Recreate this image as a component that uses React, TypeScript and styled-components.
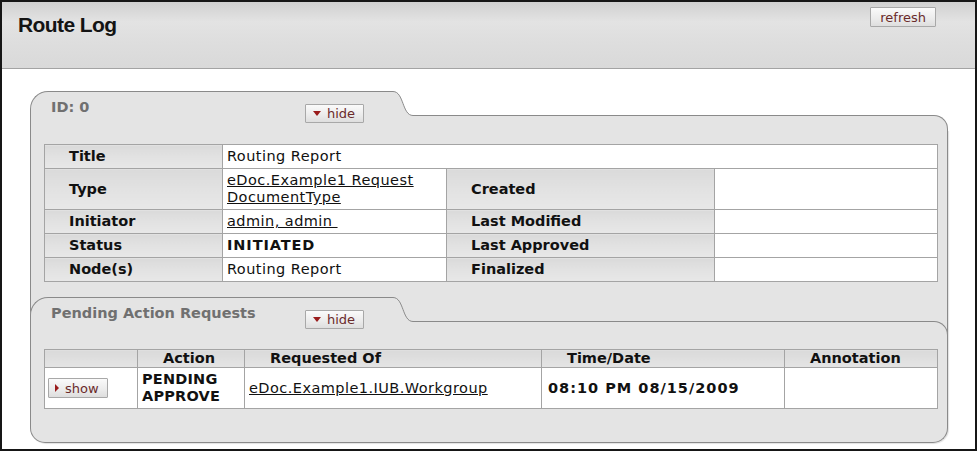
import React from "react";
import styled, { createGlobalStyle } from "styled-components";

const GlobalStyle = createGlobalStyle`
  html, body { margin: 0; padding: 0; background: #fff; }
  body { font-family: "DejaVu Sans", Verdana, sans-serif; }
`;

const LINE = "#8a8a8a";
const PANEL = "#e4e4e4";
const CELL_LINE = "#a4a4a4";

const Frame = styled.div`
  width: 977px;
  height: 451px;
  box-sizing: border-box;
  border: 2px solid #161616;
  background: #fff;
  overflow: hidden;
`;

const PageHeader = styled.header`
  height: 67px;
  box-sizing: border-box;
  border-bottom: 1px solid #a3a3a3;
  background: linear-gradient(180deg, #d0d0d0 0%, #e3e3e3 30%, #dedede 60%, #d9d9d9 100%);
  display: flex;
  justify-content: space-between;
  align-items: flex-start;
  padding: 5px 39px 0 16px;
`;

const PageTitle = styled.h1`
  margin: 6px 0 0;
  font-family: "Liberation Sans", Arial, sans-serif;
  font-weight: bold;
  font-size: 21px;
  line-height: 24px;
  letter-spacing: -0.6px;
  color: #141414;
`;

const SmallButton = styled.button<{ $h?: number; $pl?: number; $pr?: number }>`
  display: inline-flex;
  align-items: center;
  gap: 6px;
  height: ${(p) => p.$h ?? 19}px;
  box-sizing: border-box;
  padding: 0 ${(p) => p.$pr ?? 8}px 0 ${(p) => p.$pl ?? 7}px;
  border: 1px solid #a8a8a8;
  border-radius: 1px;
  background: linear-gradient(180deg, #fafafa 0%, #ebebeb 60%, #dedede 100%);
  font-family: "DejaVu Sans", Verdana, sans-serif;
  font-size: 13px;
  line-height: 15px;
  color: #6a2a2a;
  cursor: pointer;
`;

const Triangle = styled.span<{ $dir: "down" | "right" }>`
  width: 0;
  height: 0;
  display: inline-block;
  ${(p) =>
    p.$dir === "down"
      ? `border-left: 4px solid transparent; border-right: 4px solid transparent; border-top: 5px solid #9a1c1c;`
      : `border-top: 4px solid transparent; border-bottom: 4px solid transparent; border-left: 4px solid #9a1c1c;`}
`;

const Panel = styled.section`
  margin: 22px 0 0 28px;
  width: 918px;
`;

const SectionHeader = styled.div<{ $inset?: boolean }>`
  display: flex;
  height: 39px;
  margin: ${(p) => (p.$inset ? "15px -1px 13px" : "0")};
`;

const Tab = styled.div`
  width: 363px;
  flex-shrink: 0;
  box-sizing: border-box;
  border-top: 1px solid ${LINE};
  border-left: 1px solid ${LINE};
  border-top-left-radius: 18px;
  background: ${PANEL};
  display: grid;
  grid-template-columns: 254px auto;
  align-items: start;
  padding-left: 20px;
`;

const TabTitle = styled.h2`
  margin: 0;
  padding-top: 7px;
  font-size: 14.5px;
  line-height: 17px;
  font-weight: bold;
  color: #707070;
`;

const TabButton = styled.div`
  margin-top: 9px;
`;

const Connector = styled.svg`
  flex-shrink: 0;
  display: block;
`;

const TabRest = styled.div`
  flex: 1;
  margin-top: 24px;
  border-top: 1px solid ${LINE};
  border-right: 1px solid ${LINE};
  border-top-right-radius: 14px;
  background: ${PANEL};
`;

const PanelBody = styled.div`
  background: ${PANEL};
  border: 1px solid ${LINE};
  border-top: none;
  border-bottom-left-radius: 15px;
  border-bottom-right-radius: 15px;
  padding: 14px 0 33px;
  box-shadow: 1px 1px 1px rgba(0, 0, 0, 0.12);
`;

const DataTable = styled.table`
  margin: 0 10px 0 13px;
  width: 893px;
  border-collapse: collapse;
  table-layout: fixed;
  font-size: 14.5px;
  line-height: 17px;
  color: #111;

  th,
  td {
    border: 1px solid ${CELL_LINE};
    vertical-align: middle;
  }
`;

const LabelCell = styled.th`
  text-align: left;
  font-weight: bold;
  padding: 3px 5px 3px 24px;
  background: linear-gradient(180deg, #dadada 0%, #e2e2e2 50%, #e8e8e8 100%);
`;

const ValueCell = styled.td<{ $bold?: boolean; $pad?: number; $ls?: number }>`
  background: #fff;
  padding: 3px 5px 3px ${(p) => p.$pad ?? 4}px;
  font-weight: ${(p) => (p.$bold ? "bold" : "normal")};
  letter-spacing: ${(p) => p.$ls ?? 0.45}px;
`;

const HeadCell = styled.th`
  text-align: left;
  font-weight: bold;
  padding: 0 5px 0 25px;
  line-height: 17px;
  background: linear-gradient(180deg, #dadada 0%, #e4e4e4 100%);
`;

const DocLink = styled.a`
  color: #111;
  text-decoration: underline;
`;

type SectionTitleProps = { title: string; inset?: boolean };

const TabHeader: React.FC<SectionTitleProps> = ({ title, inset }) => (
  <SectionHeader $inset={inset}>
    <Tab>
      <TabTitle>{title}</TabTitle>
      <TabButton>
        <SmallButton $h={19}>
          <Triangle $dir="down" />
          hide
        </SmallButton>
      </TabButton>
    </Tab>
    <Connector width="20" height="39" viewBox="0 0 20 39">
      <path d="M0,0.5 C11,0.5 9,24.5 20,24.5 L20,39 L0,39 Z" fill={PANEL} />
      <path d="M0,0.5 C11,0.5 9,24.5 20,24.5" fill="none" stroke={LINE} strokeWidth="1" />
    </Connector>
    <TabRest />
  </SectionHeader>
);

export default function App() {
  return (
    <>
      <GlobalStyle />
      <Frame>
        <PageHeader>
          <PageTitle>Route Log</PageTitle>
          <SmallButton $h={20} $pl={9} $pr={9}>refresh</SmallButton>
        </PageHeader>
        <Panel>
          <TabHeader title="ID: 0" />
          <PanelBody>
            <DataTable>
              <colgroup>
                <col style={{ width: 178 }} />
                <col style={{ width: 224 }} />
                <col style={{ width: 268 }} />
                <col style={{ width: 223 }} />
              </colgroup>
              <tbody>
                <tr>
                  <LabelCell>Title</LabelCell>
                  <ValueCell colSpan={3}>Routing Report</ValueCell>
                </tr>
                <tr>
                  <LabelCell>Type</LabelCell>
                  <ValueCell>
                    <DocLink href="#">eDoc.Example1 Request DocumentType</DocLink>
                  </ValueCell>
                  <LabelCell>Created</LabelCell>
                  <ValueCell />
                </tr>
                <tr>
                  <LabelCell>Initiator</LabelCell>
                  <ValueCell>
                    <DocLink href="#">admin, admin&nbsp;</DocLink>
                  </ValueCell>
                  <LabelCell>Last Modified</LabelCell>
                  <ValueCell />
                </tr>
                <tr>
                  <LabelCell>Status</LabelCell>
                  <ValueCell $bold $ls={0.9}>INITIATED</ValueCell>
                  <LabelCell>Last Approved</LabelCell>
                  <ValueCell />
                </tr>
                <tr>
                  <LabelCell>Node(s)</LabelCell>
                  <ValueCell>Routing Report</ValueCell>
                  <LabelCell>Finalized</LabelCell>
                  <ValueCell />
                </tr>
              </tbody>
            </DataTable>

            <TabHeader title="Pending Action Requests" inset />

            <DataTable>
              <colgroup>
                <col style={{ width: 93 }} />
                <col style={{ width: 107 }} />
                <col style={{ width: 297 }} />
                <col style={{ width: 243 }} />
                <col style={{ width: 153 }} />
              </colgroup>
              <thead>
                <tr>
                  <HeadCell />
                  <HeadCell>Action</HeadCell>
                  <HeadCell>Requested Of</HeadCell>
                  <HeadCell>Time/Date</HeadCell>
                  <HeadCell>Annotation</HeadCell>
                </tr>
              </thead>
              <tbody>
                <tr>
                  <ValueCell $pad={3}>
                    <SmallButton $h={20} $pl={6}>
                      <Triangle $dir="right" />
                      show
                    </SmallButton>
                  </ValueCell>
                  <ValueCell $bold $ls={0.2}>
                    PENDING
                    <br />
                    APPROVE
                  </ValueCell>
                  <ValueCell>
                    <DocLink href="#">eDoc.Example1.IUB.Workgroup</DocLink>
                  </ValueCell>
                  <ValueCell $bold $ls={1} $pad={6}>08:10 PM 08/15/2009</ValueCell>
                  <ValueCell />
                </tr>
              </tbody>
            </DataTable>
          </PanelBody>
        </Panel>
      </Frame>
    </>
  );
}
